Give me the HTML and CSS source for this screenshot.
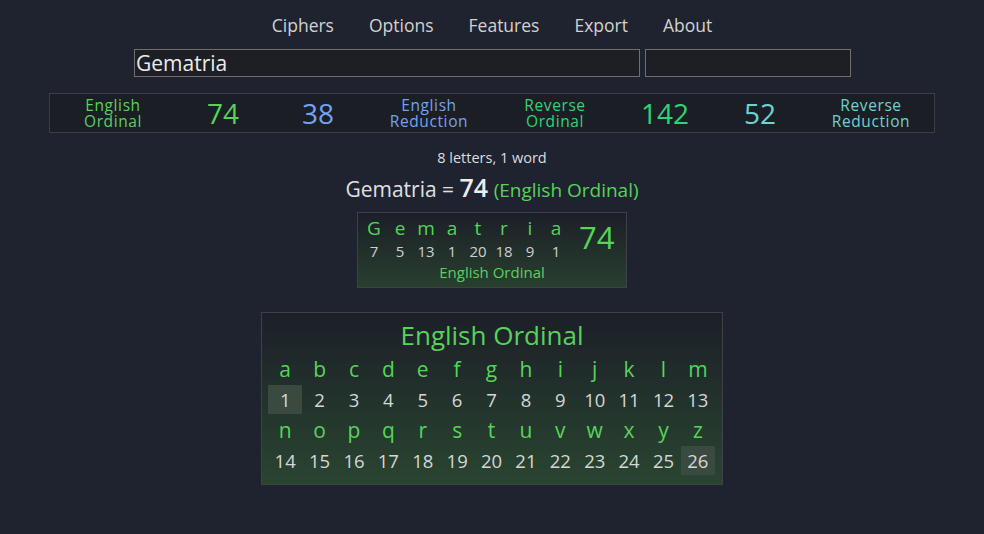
FILE: index.html
```html
<!DOCTYPE html>
<html>
<head>
<meta charset="utf-8">
<link rel="stylesheet" href="styles.css">
</head>
<body>
<nav class="nav">
  <span class="nav-item">Ciphers</span>
  <span class="nav-item">Options</span>
  <span class="nav-item">Features</span>
  <span class="nav-item">Export</span>
  <span class="nav-item">About</span>
</nav>
<div class="inputs">
  <input class="main-input" type="text" value="Gematria">
  <input class="side-input" type="text" value="">
</div>
<div class="cipher-table">
  <div class="cell label c-eo"><span class="ln">English</span><span class="ln">Ordinal</span></div>
  <div class="cell num c-eo">74</div>
  <div class="cell num c-er">38</div>
  <div class="cell label c-er"><span class="ln">English</span><span class="ln">Reduction</span></div>
  <div class="cell label c-ro"><span class="ln">Reverse</span><span class="ln">Ordinal</span></div>
  <div class="cell num c-ro">142</div>
  <div class="cell num c-rr">52</div>
  <div class="cell label c-rr"><span class="ln">Reverse</span><span class="ln">Reduction</span></div>
</div>
<div class="count">8 letters, 1 word</div>
<div class="summary">Gematria = <b class="sum-num">74</b> <span class="c-eo sum-cipher">(English Ordinal)</span></div>
<div class="breakdown-wrap">
  <div class="breakdown">
    <div class="bd-main">
      <div class="bd-cols">
        <div class="bd-col"><span class="bd-l">G</span><span class="bd-n">7</span></div>
        <div class="bd-col"><span class="bd-l">e</span><span class="bd-n">5</span></div>
        <div class="bd-col"><span class="bd-l">m</span><span class="bd-n">13</span></div>
        <div class="bd-col"><span class="bd-l">a</span><span class="bd-n">1</span></div>
        <div class="bd-col"><span class="bd-l">t</span><span class="bd-n">20</span></div>
        <div class="bd-col"><span class="bd-l">r</span><span class="bd-n">18</span></div>
        <div class="bd-col"><span class="bd-l">i</span><span class="bd-n">9</span></div>
        <div class="bd-col"><span class="bd-l">a</span><span class="bd-n">1</span></div>
      </div>
      <div class="bd-total">74</div>
    </div>
    <div class="bd-name">English Ordinal</div>
  </div>
</div>
<div class="chart-wrap">
  <div class="chart">
    <div class="chart-title">English Ordinal</div>
    <div class="chart-grid">
      <span class="ch-l">a</span><span class="ch-l">b</span><span class="ch-l">c</span><span class="ch-l">d</span><span class="ch-l">e</span><span class="ch-l">f</span><span class="ch-l">g</span><span class="ch-l">h</span><span class="ch-l">i</span><span class="ch-l">j</span><span class="ch-l">k</span><span class="ch-l">l</span><span class="ch-l">m</span>
      <span class="ch-n hl">1</span><span class="ch-n">2</span><span class="ch-n">3</span><span class="ch-n">4</span><span class="ch-n">5</span><span class="ch-n">6</span><span class="ch-n">7</span><span class="ch-n">8</span><span class="ch-n">9</span><span class="ch-n">10</span><span class="ch-n">11</span><span class="ch-n">12</span><span class="ch-n">13</span>
      <span class="ch-l">n</span><span class="ch-l">o</span><span class="ch-l">p</span><span class="ch-l">q</span><span class="ch-l">r</span><span class="ch-l">s</span><span class="ch-l">t</span><span class="ch-l">u</span><span class="ch-l">v</span><span class="ch-l">w</span><span class="ch-l">x</span><span class="ch-l">y</span><span class="ch-l">z</span>
      <span class="ch-n">14</span><span class="ch-n">15</span><span class="ch-n">16</span><span class="ch-n">17</span><span class="ch-n">18</span><span class="ch-n">19</span><span class="ch-n">20</span><span class="ch-n">21</span><span class="ch-n">22</span><span class="ch-n">23</span><span class="ch-n">24</span><span class="ch-n">25</span><span class="ch-n hl">26</span>
    </div>
  </div>
</div>
</body>
</html>
```
FILE: styles.css
```css
html, body {
  margin: 0;
  padding: 0;
  background: #1f2330;
  color: #dcdcdc;
  font-family: "Open Sans", "DejaVu Sans", sans-serif;
}
.nav {
  display: flex;
  justify-content: center;
  gap: 35px;
  padding-top: 14px;
  height: 35px;
  box-sizing: border-box;
}
.nav-item {
  font-size: 17.5px;
  line-height: 22px;
  color: #d2d2d2;
}
.inputs {
  display: flex;
  gap: 5px;
  padding-left: 134px;
  margin-top: 14px;
}
.main-input, .side-input {
  box-sizing: border-box;
  height: 28px;
  background: #1e1f24;
  border: 1px solid #6f6f6f;
  color: #ececec;
  font-family: "Open Sans", sans-serif;
  font-size: 21px;
  padding: 0 1px;
  margin: 0;
  outline: none;
}
.main-input { width: 506px; }
.side-input { width: 206px; }
.cipher-table {
  margin: 16px 0 0 49px;
  width: 886px;
  box-sizing: border-box;
  height: 40px;
  border: 1px solid #3b3d44;
  background: #1c1e26;
  display: grid;
  grid-template-columns: 126px 94px 96px 126px 126px 94px 96px 126px;
  align-items: center;
}
.cell { text-align: center; }
.label {
  display: flex;
  flex-direction: column;
  align-items: center;
  font-size: 15.5px;
  letter-spacing: 0.6px;
}
.ln { display: block; line-height: 17px; height: 16px; }
.num { font-size: 28px; line-height: 34px; margin-top: -1px; }
.c-eo { color: #57d35a; }
.c-er { color: #73a3ee; }
.c-ro { color: #2ed475; }
.c-rr { color: #6cd3d0; }
.count {
  text-align: center;
  font-size: 14.5px;
  margin-top: 16px;
  line-height: 18px;
  color: #dddddd;
}
.summary {
  text-align: center;
  font-size: 21px;
  line-height: 28px;
  margin-top: 6px;
  color: #e0e0e0;
}
.sum-num { font-size: 25px; font-weight: 600; color: #ececec; }
.sum-cipher { font-size: 19px; }
.breakdown-wrap {
  display: flex;
  justify-content: center;
  margin-top: 8px;
}
.breakdown {
  width: 270px;
  height: 76px;
  box-sizing: border-box;
  border: 1px solid #3f4146;
  background: linear-gradient(to bottom, #1c1f28, #283f2e);
  padding: 4px 0 0 3px;
}
.bd-main {
  display: flex;
  align-items: center;
}
.bd-cols { display: flex; }
.bd-col {
  width: 26px;
  display: flex;
  flex-direction: column;
  align-items: center;
}
.bd-l { color: #57d35a; font-size: 19px; line-height: 22px; }
.bd-n { color: #cfcfcf; font-size: 15px; line-height: 24px; }
.bd-total {
  color: #57d35a;
  font-size: 31px;
  margin-left: 10px;
  margin-top: -6px;
}
.bd-name {
  text-align: center;
  color: #57d35a;
  font-size: 15px;
  line-height: 18px;
  margin-top: 0;
  padding-right: 3px;
}
.chart-wrap {
  display: flex;
  justify-content: center;
  margin-top: 24px;
}
.chart {
  width: 462px;
  box-sizing: border-box;
  height: 173px;
  border: 1px solid #3f4146;
  background: linear-gradient(to bottom, #1c1f28, #294530);
  padding: 5px 6px 0 6px;
}
.chart-title {
  text-align: center;
  color: #57d35a;
  font-size: 26px;
  line-height: 34px;
}
.chart-grid {
  display: grid;
  grid-template-columns: repeat(13, 34.4px);
  grid-template-rows: 30px 31px 30px 31px;
  margin-top: 2px;
}
.ch-l, .ch-n {
  display: flex;
  align-items: center;
  justify-content: center;
}
.ch-l { color: #57d35a; font-size: 21px; }
.ch-n { color: #d6d6d6; font-size: 18.5px; }
.hl { background: #3a4a40; margin: 1px 0; }
```
